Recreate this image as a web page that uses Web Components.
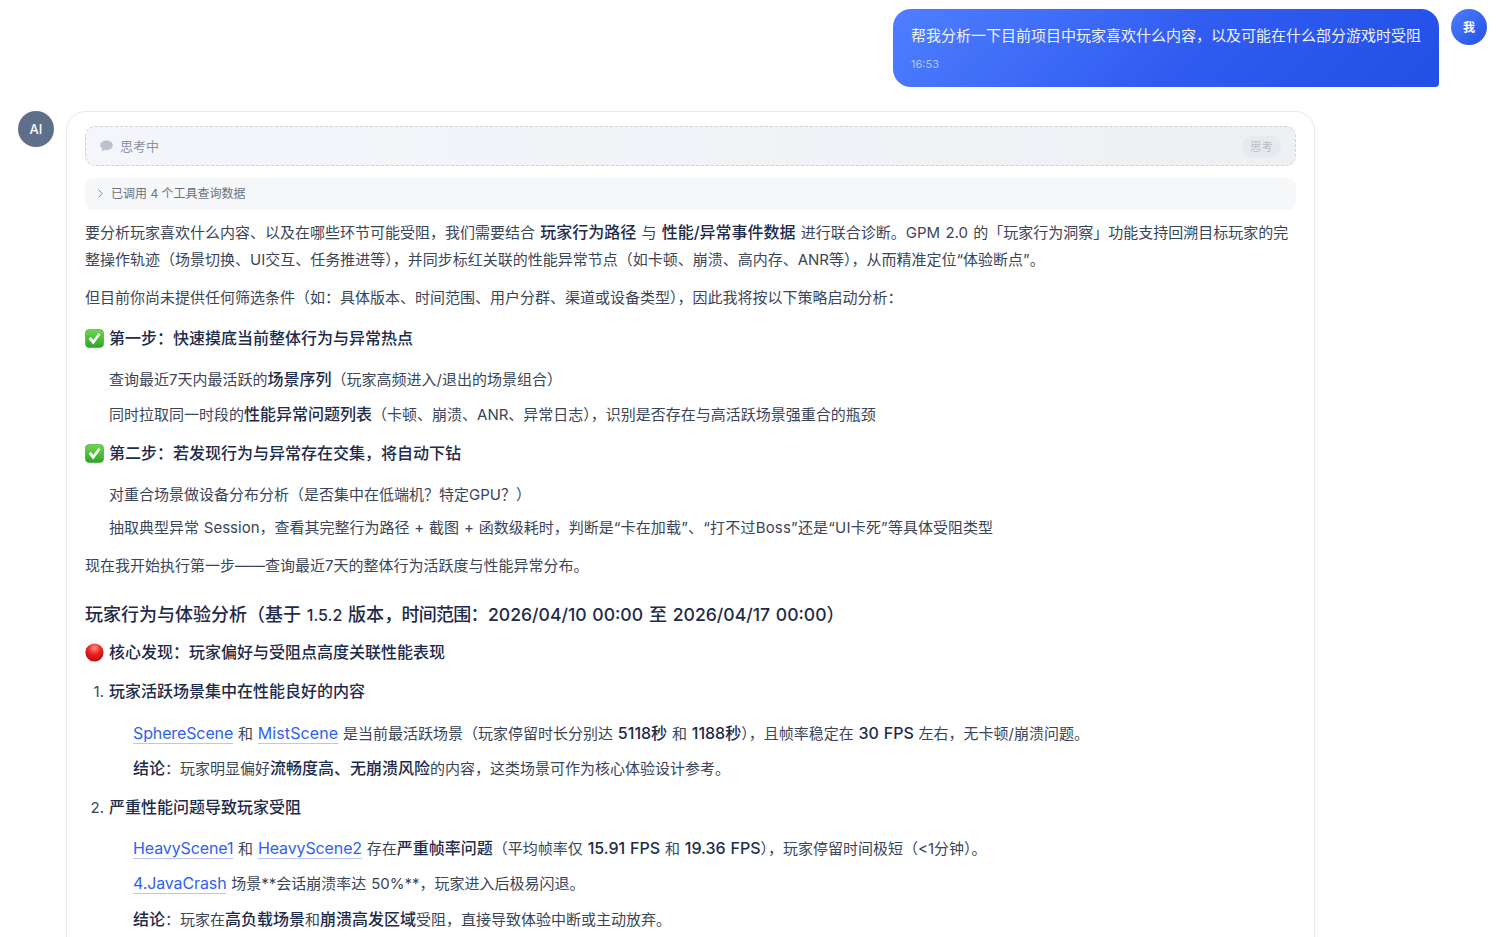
<!DOCTYPE html>
<html lang="zh-CN">
<head>
<meta charset="utf-8">
<title>玩家行为分析</title>
<style>
html, body {
	margin: 0;
	height: 100%;
	overflow: hidden;
	background: #fff;
}
body {
	font-family: Inter, "Noto Sans CJK SC", sans-serif;
	font-size: 15px;
	line-height: 27px;
	color: #3b4558;
}
/* latin runs inside the big title sit lighter than the CJK around them */
.ver { font-size: 16px; font-weight: 500; }
.date { font-size: 17.6px; font-weight: 500; }
.tight { letter-spacing: -0.7px; }
.quoted { letter-spacing: 0.2px; }
</style>
</head>
<body>
<chat-list>
	<user-message time="16:53">帮我分析一下目前项目中玩家喜欢什么内容，以及可能在什么部分游戏时受阻</user-message>
	<ai-message>
		<thinking-box></thinking-box>
		<tool-summary>已调用 4 个工具查询数据</tool-summary>

		<md-p style="--mt: 9px; --ws: 1px">要分析玩家喜欢什么内容、以及在哪些环节可能受阻，我们需要结合 <b-t>玩家行为路径</b-t> 与 <b-t>性能/异常事件数据</b-t> 进行联合诊断。GPM 2.0 的「玩家行为洞察」功能支持回溯目标玩家的完<br>整操作轨迹（场景切换、UI交互、任务推进等），并同步标红关联的性能异常节点（如卡顿、崩溃、高内存、ANR等），从而精准定位“体验断点”。</md-p>
		<md-p style="--mt: 11px">但目前你尚未提供任何筛选条件（如：具体版本、时间范围、用户分群、渠道或设备类型），因此我将按以下策略启动分析：</md-p>

		<md-heading icon="check" style="--mt: 14px">第一步：快速摸底当前整体行为与异常热点</md-heading>
		<md-p style="--mt: 14px; --ml: 24px">查询最近7天内最活跃的<b-t>场景序列</b-t>（玩家高频进入/退出的场景组合）</md-p>
		<md-p style="--mt: 8px; --ml: 24px">同时拉取同一时段的<b-t>性能异常问题列表</b-t>（卡顿、崩溃、ANR、异常日志），识别是否存在与高活跃场景强重合的瓶颈</md-p>

		<md-heading icon="check" style="--mt: 12px">第二步：若发现行为与异常存在交集，将自动下钻</md-heading>
		<md-p style="--mt: 14px; --ml: 24px">对重合场景做设备分布分析（是否集中在低端机？特定GPU？）</md-p>
		<md-p style="--mt: 6px; --ml: 24px">抽取典型异常 Session，查看其完整行为路径 + 截图 + 函数级耗时，判断是<span class="quoted">“卡在加载”、“打不过Boss”还是“UI卡死”</span>等具体受阻类型</md-p>
		<md-p style="--mt: 11px">现在我开始执行第一步——查询最近7天的整体行为活跃度与性能异常分布。</md-p>

		<md-title>玩家行为与体验分析（基于 <span class="ver">1.5.2</span> 版本<span class="tight">，时间范围：</span><span class="date">2026/04/10 00:00</span> 至 <span class="date">2026/04/17 00:00</span>）</md-title>
		<md-heading icon="dot" style="--mt: 10px">核心发现：玩家偏好与受阻点高度关联性能表现</md-heading>

		<md-heading num="1." style="--mt: 12px">玩家活跃场景集中在性能良好的内容</md-heading>
		<md-p style="--mt: 15px; --ml: 48px"><scene-link>SphereScene</scene-link> 和 <scene-link style="letter-spacing: 0.1px">MistScene</scene-link> 是当前最活跃场景（玩家停留时长分别达 <b-t>5118秒</b-t> 和 <b-t>1188秒</b-t>），且帧率稳定在 <b-t>30 FPS</b-t> 左右，无卡顿/崩溃问题。</md-p>
		<md-p style="--mt: 8px; --ml: 48px"><b-t>结论</b-t>：玩家明显偏好<b-t>流畅度高、无崩溃风险</b-t>的内容，这类场景可作为核心体验设计参考。</md-p>

		<md-heading num="2." style="--mt: 12px">严重性能问题导致玩家受阻</md-heading>
		<md-p style="--mt: 14px; --ml: 48px"><scene-link>HeavyScene1</scene-link> 和 <scene-link>HeavyScene2</scene-link> 存在<b-t>严重帧率问题</b-t>（平均帧率仅 <b-t>15.91 FPS</b-t> 和 <b-t>19.36 FPS</b-t>），玩家停留时间极短（&lt;1分钟）。</md-p>
		<md-p style="--mt: 8px; --ml: 48px"><scene-link>4.JavaCrash</scene-link> 场景**会话崩溃率达 50%**，玩家进入后极易闪退。</md-p>
		<md-p style="--mt: 9px; --ml: 48px"><b-t>结论</b-t>：玩家在<b-t>高负载场景</b-t>和<b-t>崩溃高发区域</b-t>受阻，直接导致体验中断或主动放弃。</md-p>
	</ai-message>
</chat-list>

<script>
(() => {
	/**
	 * @param {string} name
	 * @param {string} html
	 */
	function defineSimple(name, html) {
		const template = document.createElement("template");
		// no stray whitespace: an inline host would render it as a gap
		template.innerHTML = html.trim().replace("</style>\n", "</style>");
		customElements.define(
			name,
			class extends HTMLElement {
				constructor() {
					super();
					const root = this.attachShadow({ mode: "open" });
					root.append(template.content.cloneNode(true));
				}
			},
		);
	}

	defineSimple("chat-list", `
<style>
:host {
	display: flex;
	flex-direction: column;
	row-gap: 24px;
	padding: 9px 16px 0 18px;
}
</style>
<slot></slot>
`);

	const userTemplate = document.createElement("template");
	userTemplate.innerHTML = `
<style>
:host {
	display: flex;
	justify-content: flex-end;
	column-gap: 12px;
}
.bubble {
	box-sizing: border-box;
	height: 78px;
	padding: 13px 18px 0;
	border-radius: 18px 18px 4px 18px;
	background: linear-gradient(135deg, #4f7fff 0%, #2f5bf0 55%, #224fe6 100%);
	color: #eef2ff;
}
.time {
	margin-top: 6px;
	font-size: 11px;
	line-height: 18px;
	color: rgba(255, 255, 255, 0.6);
}
.avatar {
	display: flex;
	align-items: center;
	justify-content: center;
	flex: none;
	width: 36px;
	height: 36px;
	border-radius: 50%;
	background: linear-gradient(135deg, #4f7fff, #224fe6);
	color: #fff;
	font-size: 12px;
	font-weight: 700;
}
</style>
<div class="bubble"><slot></slot><div class="time"></div></div>
<div class="avatar">我</div>
`;
	customElements.define(
		"user-message",
		class extends HTMLElement {
			constructor() {
				super();
				const root = this.attachShadow({ mode: "open" });
				root.append(userTemplate.content.cloneNode(true));
				root.querySelector(".time").textContent = this.getAttribute("time");
			}
		},
	);

	defineSimple("ai-message", `
<style>
:host {
	display: flex;
	column-gap: 12px;
	align-items: flex-start;
}
.avatar {
	display: flex;
	align-items: center;
	justify-content: center;
	flex: none;
	width: 36px;
	height: 36px;
	border-radius: 50%;
	background: #5f6f89;
	color: #fff;
	font-size: 13px;
	font-weight: 500;
}
.card {
	box-sizing: border-box;
	width: 1249px;
	padding: 14px 18px 40px;
	border: 1px solid #e8eaf1;
	border-radius: 20px;
	background: #fff;
	box-shadow: 0 1px 4px rgba(30, 40, 80, 0.03);
}
</style>
<div class="avatar">AI</div>
<div class="card"><slot></slot></div>
`);

	defineSimple("thinking-box", `
<style>
:host {
	box-sizing: border-box;
	display: flex;
	align-items: center;
	height: 40px;
	padding: 0 14px;
	border: 1px dashed #cfd3dd;
	border-radius: 10px;
	background: linear-gradient(90deg, #f5f6fb, #eff0f4);
	color: #8b93a3;
	font-size: 13px;
}
svg {
	flex: none;
	margin-right: 7px;
}
.label {
	flex: 1;
}
.pill {
	padding: 0 8px;
	height: 21px;
	border-radius: 11px;
	background: #e8e9ed;
	color: #b8bcc6;
	font-size: 11.5px;
	line-height: 22px;
}
</style>
<svg width="13" height="12" viewBox="0 0 13 12"><path fill="#bcc2cd" d="M6.5 0.4C3 0.4 0.2 2.5 0.2 5.2c0 1.5.9 2.9 2.3 3.8-.1.8-.5 1.6-1 2.3 1.3-.1 2.5-.7 3.4-1.5.5.1 1 .2 1.6.2 3.5 0 6.3-2.1 6.3-4.8S10 .4 6.5.4z"/></svg>
<span class="label">思考中</span>
<span class="pill">思考</span>
`);

	defineSimple("tool-summary", `
<style>
:host {
	box-sizing: border-box;
	display: flex;
	align-items: center;
	height: 32px;
	margin-top: 12px;
	padding: 0 13px 2px;
	border-radius: 8px;
	background: #f6f7f9;
	color: #6b7280;
	font-size: 12px;
}
svg {
	flex: none;
	margin-right: 8px;
}
</style>
<svg width="5" height="9" viewBox="0 0 5 9"><path fill="none" stroke="#7b8291" stroke-width="1" d="M.6.6l3.6 3.9L.6 8.4"/></svg>
<slot></slot>
`);

	defineSimple("md-p", `
<style>
:host {
	display: block;
	margin: var(--mt, 0) 0 0 var(--ml, 0);
	line-height: 27px;
	word-spacing: var(--ws, 0.6px);
	color: #3b4558;
}
</style>
<slot></slot>
`);

	defineSimple("b-t", `
<style>
:host {
	display: inline;
	font-size: 16px;
	font-weight: 500;
	color: #1e2b4a;
}
</style>
<slot></slot>
`);

	defineSimple("scene-link", `
<style>
:host {
	display: inline-block;
	font-size: 16px;
	line-height: 20px;
	color: #2f62f0;
	border-bottom: 1px solid #b7c7fb;
	letter-spacing: -0.12px;
}
</style>
<slot></slot>
`);

	defineSimple("md-title", `
<style>
:host {
	display: block;
	margin-top: 22px;
	font-size: 18px;
	font-weight: 500;
	line-height: 27px;
	word-spacing: 1px;
	color: #1e2b4a;
}
</style>
<slot></slot>
`);

	const icons = {
		check: `<svg width="19" height="19" viewBox="0 0 20 20">
			<defs><linearGradient id="g" x1="0" y1="0" x2="0" y2="1"><stop offset="0" stop-color="#6fd84a"/><stop offset="1" stop-color="#2da52a"/></linearGradient></defs>
			<rect x="0.5" y="0.5" width="19" height="19" rx="4" fill="url(#g)" stroke="#2d9a2a" stroke-width="0.6"/>
			<path fill="#fff" d="M3.8 10.2l2.4-2 2.5 3.3 5.4-7.4 2.2 1.7-7.6 10.4z"/>
		</svg>`,
		dot: `<svg width="19" height="19" viewBox="0 0 20 20">
			<defs><radialGradient id="r" cx="0.5" cy="0.25" r="0.85"><stop offset="0" stop-color="#ff8a80"/><stop offset="0.45" stop-color="#e5201c"/><stop offset="1" stop-color="#a50d0d"/></radialGradient></defs>
			<circle cx="10" cy="10" r="9.6" fill="url(#r)"/>
		</svg>`,
	};

	const headingTemplate = document.createElement("template");
	headingTemplate.innerHTML = `
<style>
:host {
	display: flex;
	align-items: center;
	margin-top: var(--mt, 0);
	font-size: 16px;
	font-weight: 500;
	line-height: 27px;
	color: #1e2b4a;
}
.mark {
	box-sizing: border-box;
	display: flex;
	align-items: center;
	justify-content: flex-end;
	flex: none;
	width: 20px;
	margin-right: 4px;
	padding-right: 1px;
	font-size: 15px;
	font-weight: 400;
	color: #3b4558;
}
</style>
<span class="mark"></span><slot></slot>
`;
	customElements.define(
		"md-heading",
		class extends HTMLElement {
			constructor() {
				super();
				const root = this.attachShadow({ mode: "open" });
				root.append(headingTemplate.content.cloneNode(true));
				const mark = root.querySelector(".mark");
				const icon = this.getAttribute("icon");
				if (icon) {
					mark.innerHTML = icons[icon];
				} else {
					mark.textContent = this.getAttribute("num");
				}
			}
		},
	);
})();
</script>
</body>
</html>
